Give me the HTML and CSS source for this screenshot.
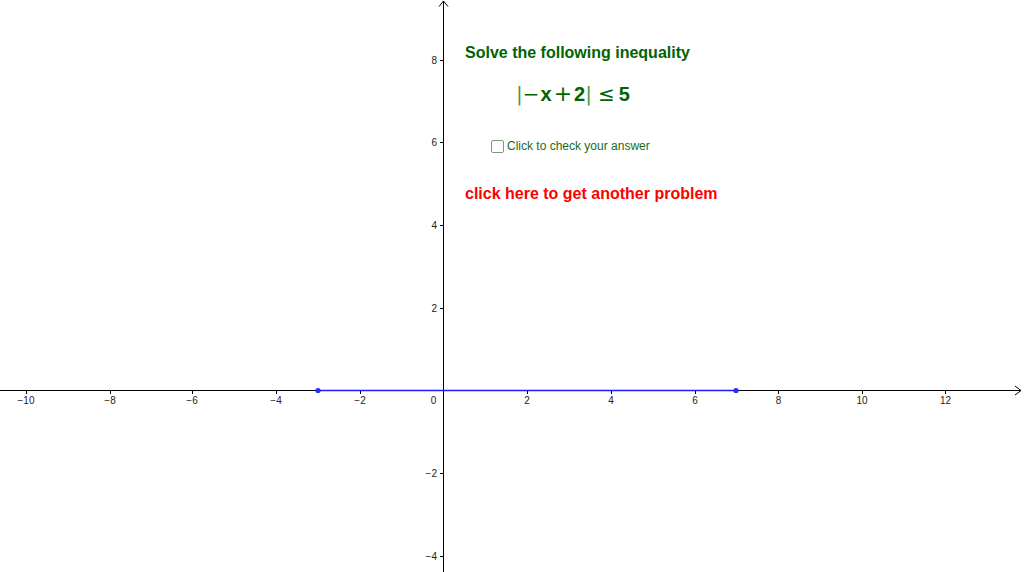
FILE: index.html
```html
<!DOCTYPE html>
<html>
<head>
<meta charset="utf-8">
<link rel="stylesheet" href="styles.css">
</head>
<body>
<div class="canvas">
<svg class="graph" width="1024" height="572" viewBox="0 0 1024 572" xmlns="http://www.w3.org/2000/svg">
  <g stroke="#000" stroke-width="1" fill="none">
    <line x1="0" y1="390.5" x2="1021" y2="390.5"/>
    <polyline points="1015,386 1021,390.5 1015,395"/>
    <line x1="443.5" y1="1" x2="443.5" y2="572"/>
    <polyline points="439,6.5 443.5,1 448,6.5"/>
    <g>
      <line x1="26.5" y1="390" x2="26.5" y2="394"/>
      <line x1="110.5" y1="390" x2="110.5" y2="394"/>
      <line x1="192.5" y1="390" x2="192.5" y2="394"/>
      <line x1="276.5" y1="390" x2="276.5" y2="394"/>
      <line x1="360.5" y1="390" x2="360.5" y2="394"/>
      <line x1="527.5" y1="390" x2="527.5" y2="394"/>
      <line x1="611.5" y1="390" x2="611.5" y2="394"/>
      <line x1="695.5" y1="390" x2="695.5" y2="394"/>
      <line x1="778.5" y1="390" x2="778.5" y2="394"/>
      <line x1="862.5" y1="390" x2="862.5" y2="394"/>
      <line x1="945.5" y1="390" x2="945.5" y2="394"/>
      <line x1="440" y1="60.5" x2="444" y2="60.5"/>
      <line x1="440" y1="142.5" x2="444" y2="142.5"/>
      <line x1="440" y1="225.5" x2="444" y2="225.5"/>
      <line x1="440" y1="308.5" x2="444" y2="308.5"/>
      <line x1="440" y1="473.5" x2="444" y2="473.5"/>
      <line x1="440" y1="556.5" x2="444" y2="556.5"/>
    </g>
  </g>
  <line x1="318" y1="390.5" x2="736" y2="390.5" stroke="#1a1aff" stroke-width="1.6"/>
  <circle cx="318" cy="390.5" r="2.6" fill="#2a2aff"/>
  <circle cx="736" cy="390.5" r="2.6" fill="#2a2aff"/>
  <g class="lbl" text-anchor="middle">
    <text x="26" y="404">−10</text>
    <text x="110" y="404">−8</text>
    <text x="192" y="404">−6</text>
    <text x="276" y="404">−4</text>
    <text x="360" y="404">−2</text>
    <text x="433.5" y="404">0</text>
    <text x="527" y="404">2</text>
    <text x="611" y="404">4</text>
    <text x="695" y="404">6</text>
    <text x="778.5" y="404">8</text>
    <text x="862" y="404">10</text>
    <text x="945.5" y="404">12</text>
  </g>
  <g class="lbl" text-anchor="end">
    <text x="437" y="64">8</text>
    <text x="437" y="146">6</text>
    <text x="437" y="229">4</text>
    <text x="437" y="312">2</text>
    <text x="437" y="477">−2</text>
    <text x="437" y="560">−4</text>
  </g>
</svg>
<div class="title">Solve the following inequality</div>
<div class="formula"><span class="bar">|</span><span class="minus">−</span>x<span class="op">+</span>2<span class="bar">|</span><span class="op leq">≤</span>5</div>
<label class="check"><span class="box"></span><span class="check-text">Click to check your answer</span></label>
<div class="another">click here to get another problem</div>
</div>
</body>
</html>
```
FILE: styles.css
```css
html, body {
  margin: 0;
  padding: 0;
  background: #fff;
  overflow: hidden;
}
.canvas {
  position: relative;
  width: 1024px;
  height: 572px;
  font-family: "Liberation Sans", Arial, sans-serif;
}
.graph {
  position: absolute;
  left: 0;
  top: 0;
}
.lbl {
  font-family: "Liberation Sans", Arial, sans-serif;
  font-size: 10px;
  fill: #222;
}
.title {
  position: absolute;
  left: 465px;
  top: 44px;
  font-size: 16px;
  font-weight: bold;
  color: #006400;
  white-space: nowrap;
}
.formula {
  position: absolute;
  left: 516px;
  top: 81px;
  font-size: 20px;
  font-weight: bold;
  color: #006400;
  white-space: nowrap;
  display: flex;
  align-items: baseline;
}
.formula .bar {
  font-family: "DejaVu Sans", sans-serif;
  font-weight: normal;
  font-size: 20px;
  color: #4c9a4c;
}
.formula .minus {
  font-family: "DejaVu Sans", sans-serif;
  font-weight: normal;
  margin-right: 1px;
}
.formula .op {
  font-family: "DejaVu Sans", sans-serif;
  font-weight: normal;
  font-size: 22px;
  margin: 0 2px;
}
.formula .leq {
  font-size: 20px;
  margin: 0 4px 0 6px;
}
.check {
  position: absolute;
  left: 491px;
  top: 139px;
  display: flex;
  align-items: center;
  gap: 3px;
}
.box {
  width: 11px;
  height: 11px;
  border: 1.5px solid #7d9a7d;
  border-radius: 2px;
  background: #fff;
}
.check-text {
  font-size: 12px;
  color: #1a6b1a;
  white-space: nowrap;
}
.another {
  position: absolute;
  left: 465px;
  top: 185px;
  font-size: 16px;
  font-weight: bold;
  color: #ff0000;
  white-space: nowrap;
}
```
